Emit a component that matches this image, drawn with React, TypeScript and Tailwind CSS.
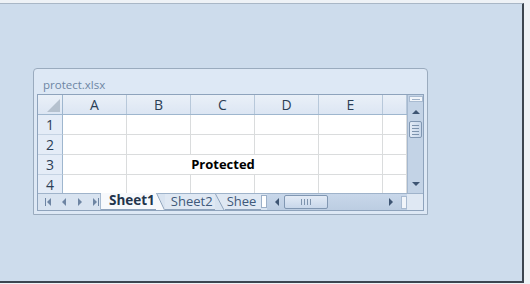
import React from "react";

const font = { fontFamily: '"Open Sans", "Noto Sans", sans-serif' };

function Tri({ dir }: { dir: "up" | "down" | "left" | "right" }) {
  const pts: Record<string, string> = {
    up: "1,6 5,2 9,6",
    down: "1,2 5,6 9,2",
    left: "6,1 2,5 6,9",
    right: "2,1 6,5 2,9",
  };
  const w = dir === "up" || dir === "down" ? 10 : 8;
  const h = dir === "up" || dir === "down" ? 8 : 10;
  return (
    <svg width={w} height={h} viewBox={`0 0 ${w} ${h}`} className="shrink-0">
      <polygon points={pts[dir]} fill="#3e5573" />
    </svg>
  );
}

function NavIcons() {
  return (
    <div className="flex items-center gap-[8px] w-[63px] shrink-0 pl-[6px] h-full border-r border-[#a8bbd1]">
      <svg width="9" height="8" viewBox="0 0 9 8">
        <rect x="1" y="0" width="1" height="8" fill="#6e85a3" />
        <polygon points="7,0 3,4 7,8" fill="#6e85a3" />
      </svg>
      <svg width="7" height="8" viewBox="0 0 7 8">
        <polygon points="5,0 1,4 5,8" fill="#6e85a3" />
      </svg>
      <svg width="7" height="8" viewBox="0 0 7 8">
        <polygon points="2,0 6,4 2,8" fill="#6e85a3" />
      </svg>
      <svg width="9" height="8" viewBox="0 0 9 8">
        <polygon points="2,0 6,4 2,8" fill="#6e85a3" />
        <rect x="7" y="0" width="1" height="8" fill="#6e85a3" />
      </svg>
    </div>
  );
}

const cols = ["A", "B", "C", "D", "E", ""];
const colW = ["w-[64px]", "w-[64px]", "w-[64px]", "w-[64px]", "w-[64px]", "w-[24px]"];

export default function App() {
  return (
    <div className="w-[530px] h-[284px] bg-[#eef2f6] overflow-hidden" style={font}>
      <div className="w-[524px] h-[280px] mt-[3px] bg-[#cddcec] border-t border-[#a9b7c6] border-r-2 border-b-2 border-r-[#3c4550] border-b-[#3c4550] pt-[64px] pl-[33px]">
        {/* window */}
        <div className="w-[395px] h-[147px] bg-[#dde8f5] border border-[#9aabbe] rounded-t-[4px] px-[3px] flex flex-col">
          <div className="h-[25px] flex items-center pl-[6px] pt-[6px] text-[11.5px] text-[#6d86a4]">
            protect.xlsx
          </div>
          <div className="border border-[#8ea3bc] bg-white flex flex-col">
            <div className="flex h-[98px] overflow-hidden">
              {/* grid */}
              <div className="flex flex-col w-[369px]">
                <div className="flex h-[20px] shrink-0 bg-gradient-to-b from-[#eaf0f8] to-[#dce6f3] border-b border-[#9eb6ce]">
                  <div className="w-[25px] shrink-0 border-r border-[#9eb6ce] flex items-end justify-end pr-[2px] pb-[2px]">
                    <svg width="13" height="13" viewBox="0 0 13 13">
                      <polygon points="13,0 13,13 0,13" fill="#b5c1ce" />
                    </svg>
                  </div>
                  {cols.map((c, i) => (
                    <div
                      key={i}
                      className={`${colW[i]} shrink-0 border-r border-[#b7c8da] flex items-center justify-center text-[14px] text-[#2b3e55]`}
                    >
                      {c}
                    </div>
                  ))}
                </div>
                {[1, 2, 3, 4].map((r) => (
                  <div key={r} className="flex h-[20px] shrink-0 border-b border-[#dadcdd]">
                    <div className="w-[25px] shrink-0 bg-[#e4ecf7] border-r border-[#9eb6ce] flex items-center justify-center text-[14px] text-[#2b3e55] border-b border-b-[#c5d3e3] -mb-px">
                      {r}
                    </div>
                    {cols.map((_, i) => (
                      <div
                        key={i}
                        className={`${colW[i]} shrink-0 ${r === 3 && (i === 1 || i === 2) ? "" : "border-r border-[#dadcdd]"} flex items-center justify-center overflow-visible whitespace-nowrap`}
                      >
                        {r === 3 && i === 2 ? (
                          <span className="text-[13px] font-bold text-black">Protected</span>
                        ) : null}
                      </div>
                    ))}
                  </div>
                ))}
              </div>
              {/* vertical scrollbar */}
              <div className="w-[16px] shrink-0 bg-[#c3d3e6] border-l border-[#a5b8cf] flex flex-col items-center">
                <div className="w-[14px] h-[6px] mt-[1px] bg-[#f1f5fa] border border-[#a9bbd1] flex items-center justify-center">
                  <div className="w-[8px] h-px bg-[#9fb1c7]" />
                </div>
                <div className="h-[14px] mt-[3px] flex items-center justify-center">
                  <Tri dir="up" />
                </div>
                <div className="w-[13px] h-[17px] mt-[2px] rounded-[2px] border border-[#8197b2] bg-gradient-to-r from-[#e3ebf6] to-[#c8d7ea] flex flex-col items-center justify-center gap-[2px]">
                  <div className="w-[7px] h-px bg-[#7d93ad]" />
                  <div className="w-[7px] h-px bg-[#7d93ad]" />
                  <div className="w-[7px] h-px bg-[#7d93ad]" />
                  <div className="w-[7px] h-px bg-[#7d93ad]" />
                </div>
                <div className="flex-1" />
                <div className="h-[14px] mb-[2px] flex items-center justify-center">
                  <Tri dir="down" />
                </div>
              </div>
            </div>
            {/* tab bar */}
            <div className="flex h-[17px] bg-[#d8e3f0] border-t border-[#9fb3ca] leading-none">
              <NavIcons />
              <div className="flex items-stretch h-full w-[160px] shrink-0">
                <div className="flex items-center pl-[8px] pr-[1px] bg-[#f7f9fc] border-b border-[#8ea3bc] font-bold text-[13.5px] text-[#23354c] -mt-px">
                  Sheet1
                </div>
                <svg width="9" height="17" viewBox="0 0 9 17" className="-mt-px shrink-0">
                  <polygon points="0,0 1,0 9,17 0,17" fill="#f7f9fc" />
                  <line x1="0.5" y1="0" x2="8.5" y2="17" stroke="#8ea3bc" />
                </svg>
                <div className="flex items-center pl-[6px] pr-[2px] text-[13px] text-[#40597a] border-b border-[#8ea3bc] bg-[#dfe8f3]">
                  Sheet2
                </div>
                <svg width="10" height="16" viewBox="0 0 10 16" className="shrink-0">
                  <polygon points="0,0 10,0 10,16 9,16" fill="#dfe8f3" />
                  <line x1="0.5" y1="0" x2="9" y2="16" stroke="#8ea3bc" />
                </svg>
                <div className="flex-1 flex items-center pl-[2px] text-[13px] text-[#40597a] whitespace-nowrap bg-[#dfe8f3] border-b border-[#8ea3bc]">
                  Shee
                </div>
              </div>
              <div className="w-[6px] shrink-0 h-[13px] mt-[1px] bg-white border border-[#9cb0c8]" />
              {/* horizontal scrollbar */}
              <div className="flex-1 flex items-center pl-[6px] bg-gradient-to-b from-[#c8d7ea] to-[#bccde2]">
                <Tri dir="left" />
                <div className="ml-[3px] w-[44px] h-[14px] rounded-[2px] border border-[#8197b2] bg-gradient-to-b from-[#e3ebf6] to-[#c8d7ea] flex items-center justify-center gap-[2px]">
                  <div className="w-px h-[6px] bg-[#7d93ad]" />
                  <div className="w-px h-[6px] bg-[#7d93ad]" />
                  <div className="w-px h-[6px] bg-[#7d93ad]" />
                  <div className="w-px h-[6px] bg-[#7d93ad]" />
                </div>
                <div className="flex-1" />
                <Tri dir="right" />
                <div className="w-[6px] h-[13px] ml-[6px] bg-[#f1f5fa] border border-[#a9bbd1]" />
              </div>
              <div className="w-[16px] shrink-0 bg-[#dfe8f3]" />
            </div>
          </div>
        </div>
      </div>
    </div>
  );
}
